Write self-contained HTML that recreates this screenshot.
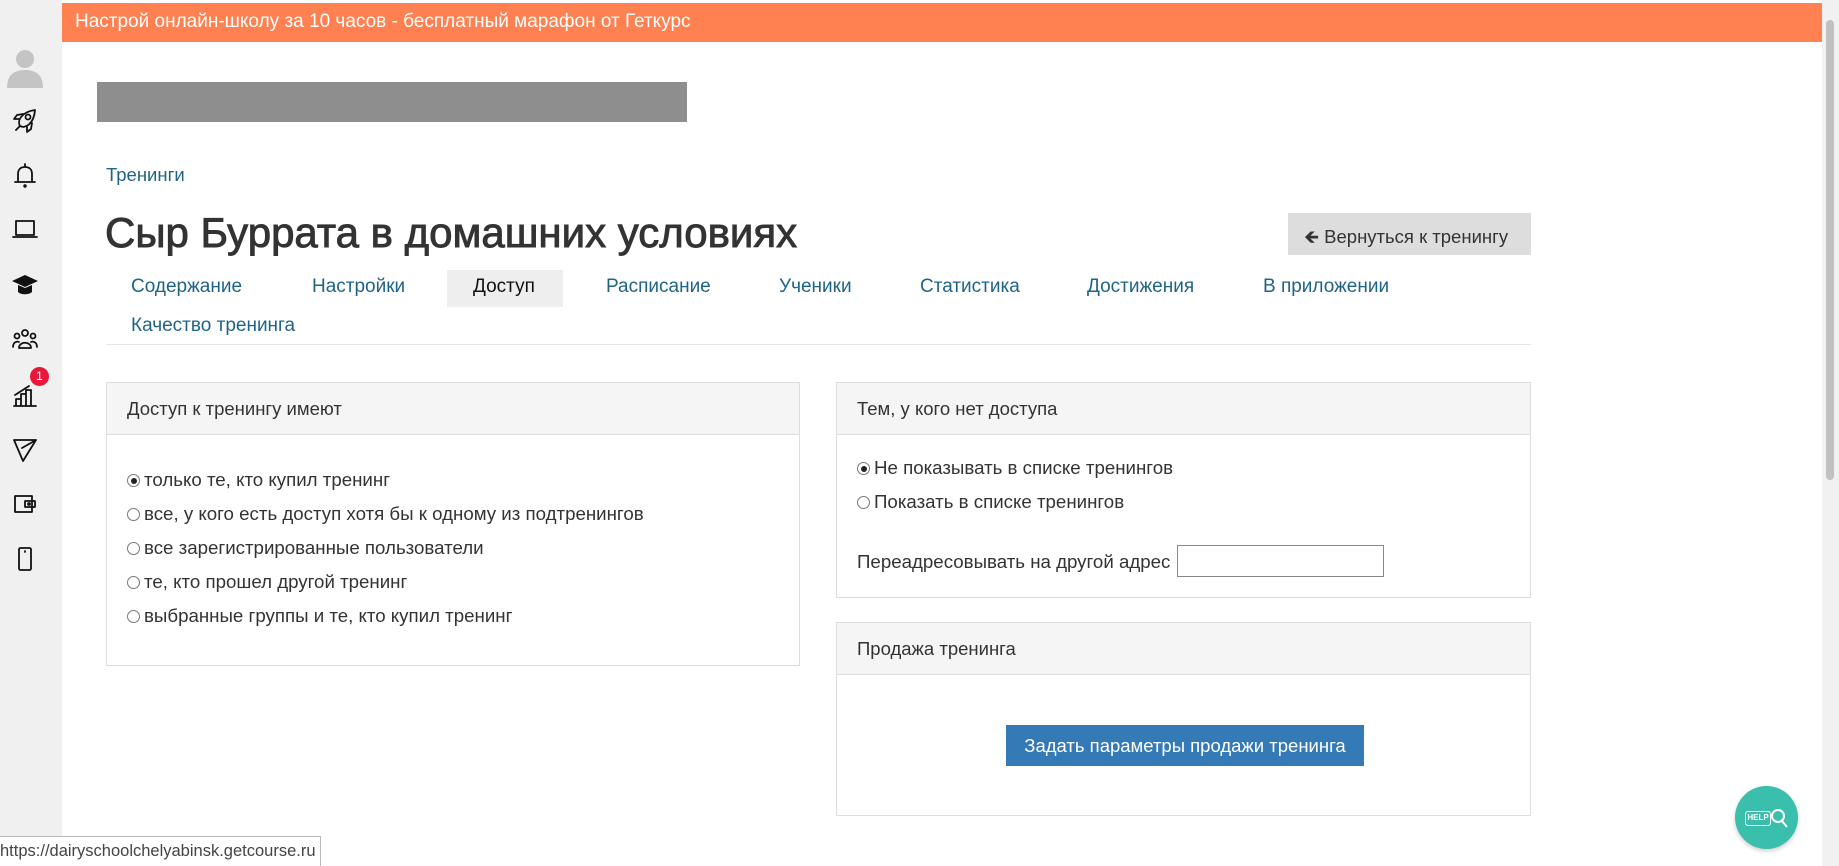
<!DOCTYPE html>
<html><head><meta charset="utf-8">
<style>
*{margin:0;padding:0;box-sizing:border-box}
body{width:1839px;height:866px;overflow:hidden;background:#fff;font-family:"Liberation Sans","Noto Sans CJK SC",sans-serif;color:#333;position:relative}
.a{position:absolute;white-space:nowrap}
.side{left:0;top:0;width:62px;height:866px;background:#f0f0f0}
.link{color:#1f6487;font-size:18.5px}
.tab{top:276px;font-size:19px;color:#1f6487}
.panel{border:1px solid #ddd;background:#fff}
.ph{position:absolute;left:0;right:0;top:0;height:52px;background:#f5f5f5;border-bottom:1px solid #ddd;font-size:18.5px;padding:15px 0 0 20px;color:#333}
.rad{font-size:18.7px;color:#333}
.rad i{display:inline-block;width:13px;height:13px;border:1px solid #777;border-radius:50%;vertical-align:-1px;margin-right:4px;position:relative}
.rad i.on::after{content:"";position:absolute;left:2.5px;top:2.5px;width:6px;height:6px;border-radius:50%;background:#222}
svg.ic{position:absolute;left:11px;width:28px;height:28px;fill:none;stroke:#111;stroke-width:1.8;stroke-linecap:round;stroke-linejoin:round}
</style></head><body>
<div class="a side"></div>
<svg class="ic" style="top:44px;left:3px;width:44px;height:44px;stroke:none" viewBox="0 0 44 44"><circle cx="22" cy="15" r="9" fill="#c4c4c4"/><path d="M4 44 C4 30 12 26 22 26 C32 26 40 30 40 44Z" fill="#c4c4c4"/></svg>
<svg class="ic" style="top:107px" viewBox="0 0 28 28"><path d="M9 19 C6 14 10 5 24 3 C23 17 14 22 9 19Z"/><circle cx="17" cy="10" r="2.5"/><path d="M9 19 L5 23 M8 12 L3 12 L6 8 L12 7 M16 20 L16 25 L20 22 L21 16"/></svg>
<svg class="ic" style="top:161px" viewBox="0 0 28 28"><path d="M14 3 V5 M7 21 V13 C7 8 10 6 14 6 C18 6 21 8 21 13 V21 H4 H24"/><circle cx="14" cy="25" r="0.8" fill="#111"/></svg>
<svg class="ic" style="top:215px" viewBox="0 0 28 28"><path d="M5 6 H23 V20 H5Z M2 22 H26"/></svg>
<svg class="ic" style="top:270px;stroke:none" viewBox="0 0 28 28"><path d="M14 5 L27 11 L14 17 L1 11Z" fill="#111"/><path d="M7 15 V22 C10 25 18 25 21 22 V15 L14 18Z" fill="#111"/></svg>
<svg class="ic" style="top:326px" viewBox="0 0 28 28"><circle cx="14" cy="7" r="3"/><circle cx="6" cy="10" r="2.5"/><circle cx="22" cy="10" r="2.5"/><path d="M8 22 C8 15 20 15 20 22Z M2 21 C2 16 6 15 8 16 M26 21 C26 16 22 15 20 16"/></svg>
<svg class="ic" style="top:381px" viewBox="0 0 28 28"><path d="M3 25 H25 M5 25 V18 H10 V25 M10 25 V13 H15 V25 M15 25 V9 H20 V25 M4 14 L18 5"/></svg>
<div class="a" style="left:30px;top:367px;width:19px;height:19px;border-radius:50%;background:#e8173c;color:#fff;font-size:12px;text-align:center;line-height:19px">1</div>
<svg class="ic" style="top:435px" viewBox="0 0 28 28"><path d="M3 5 L25 5 L12 26 Z M11 13 L25 5"/></svg>
<svg class="ic" style="top:490px" viewBox="0 0 28 28"><path d="M4 6 H21 V22 H4Z M14 11 H24 V17 H14Z"/><circle cx="18" cy="14" r="1" fill="#111"/></svg>
<svg class="ic" style="top:545px" viewBox="0 0 28 28"><rect x="8" y="3" width="12" height="22" rx="1.5"/><path d="M14 6 V7"/></svg>

<div class="a" style="left:62px;top:3px;width:1760px;height:39px;background:#ff8050;color:#fff;font-size:19px;padding:8px 0 0 13px">Настрой онлайн-школу за 10 часов - бесплатный марафон от Геткурс</div>
<div class="a" style="left:1822px;top:0;width:17px;height:866px;background:#f1f1f1"></div>
<div class="a" style="left:1826px;top:20px;width:8px;height:460px;background:#c1c1c1;border-radius:4px"></div>

<div class="a" style="left:97px;top:82px;width:590px;height:40px;background:#8e8e8e"></div>

<div class="a link" style="left:106px;top:164px">Тренинги</div>
<div class="a" style="left:105px;top:209px;font-size:42px;color:#333;-webkit-text-stroke:0.9px #333">Сыр Буррата в домашних условиях</div>
<div class="a" style="left:1288px;top:213px;width:243px;height:42px;background:#ddd;font-size:18.5px;padding:10px 0 0 16px">🡸 Вернуться к тренингу</div>

<div class="a" style="left:447px;top:270px;width:116px;height:37px;background:#eee"></div>
<div class="a tab" style="left:131px">Содержание</div>
<div class="a tab" style="left:312px">Настройки</div>
<div class="a tab" style="left:473px;color:#111">Доступ</div>
<div class="a tab" style="left:606px">Расписание</div>
<div class="a tab" style="left:779px">Ученики</div>
<div class="a tab" style="left:920px">Статистика</div>
<div class="a tab" style="left:1087px">Достижения</div>
<div class="a tab" style="left:1263px">В приложении</div>
<div class="a tab" style="left:131px;top:315px">Качество тренинга</div>
<div class="a" style="left:106px;top:344px;width:1425px;height:1px;background:#e6e6e6"></div>

<div class="a panel" style="left:106px;top:382px;width:694px;height:284px">
<div class="ph">Доступ к тренингу имеют</div>
<div class="a rad" style="left:20px;top:86px"><i class="on"></i>только те, кто купил тренинг</div>
<div class="a rad" style="left:20px;top:120px"><i></i>все, у кого есть доступ хотя бы к одному из подтренингов</div>
<div class="a rad" style="left:20px;top:154px"><i></i>все зарегистрированные пользователи</div>
<div class="a rad" style="left:20px;top:188px"><i></i>те, кто прошел другой тренинг</div>
<div class="a rad" style="left:20px;top:222px"><i></i>выбранные группы и те, кто купил тренинг</div>
</div>

<div class="a panel" style="left:836px;top:382px;width:695px;height:216px">
<div class="ph">Тем, у кого нет доступа</div>
<div class="a rad" style="left:20px;top:74px"><i class="on"></i>Не показывать в списке тренингов</div>
<div class="a rad" style="left:20px;top:108px"><i></i>Показать в списке тренингов</div>
<div class="a rad" style="left:20px;top:168px">Переадресовывать на другой адрес</div>
<div class="a" style="left:340px;top:162px;width:207px;height:32px;border:1px solid #888"></div>
</div>

<div class="a panel" style="left:836px;top:622px;width:695px;height:194px">
<div class="ph">Продажа тренинга</div>
<div class="a" style="left:169px;top:102px;width:358px;height:41px;background:#337ab7;color:#fff;font-size:18.5px;text-align:center;line-height:41px">Задать параметры продажи тренинга</div>
</div>

<div class="a" style="left:1735px;top:786px;width:63px;height:63px;border-radius:50%;background:#3bbfad;box-shadow:0 2px 5px rgba(0,0,0,.2)"></div>
<div class="a" style="left:1745px;top:811px;width:26px;height:15px;border:1.5px solid #fff;border-radius:3px;color:#fff;font-size:8px;font-weight:bold;text-align:center;line-height:12px">HELP</div>
<svg class="a" style="left:1770px;top:807px" width="20" height="22" viewBox="0 0 20 22"><circle cx="8" cy="9" r="6" fill="none" stroke="#fff" stroke-width="2"/><path d="M12 14 L17 20" stroke="#fff" stroke-width="2"/></svg>

<div class="a" style="left:0;top:836px;width:321px;height:30px;background:#fff;border:1px solid #bbb;border-left:none;border-bottom:none;font-size:16.5px;color:#444;padding:5px 0 0 0">https://dairyschoolchelyabinsk.getcourse.ru</div>
</body></html>
